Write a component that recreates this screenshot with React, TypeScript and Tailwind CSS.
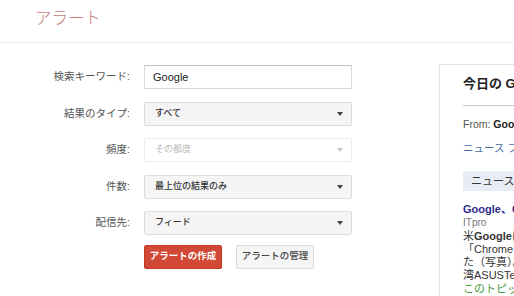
import React from 'react';

const jp = "font-['Liberation_Sans','Noto_Sans_CJK_JP',sans-serif]";

const Caret: React.FC<{ light?: boolean }> = ({ light }) => (
  <span
    className={`w-0 h-0 border-l-[3.5px] border-r-[3.5px] border-t-[4px] border-l-transparent border-r-transparent ${
      light ? 'border-t-[#c8c8c8]' : 'border-t-[#444]'
    }`}
  />
);

const Row: React.FC<{ label: string; children: React.ReactNode }> = ({ label, children }) => (
  <div className="flex items-center h-[24px]">
    <label className="w-[131px] pr-[1px] text-right text-[10.5px] text-[#555] shrink-0">{label}</label>
    <div className="ml-[13px] w-[208px]">{children}</div>
  </div>
);

const Select: React.FC<{ value: string; disabled?: boolean }> = ({ value, disabled }) => (
  <div
    className={`h-[24px] flex items-center justify-between pl-[10px] pr-[8px] rounded-[2px] border ${
      disabled
        ? 'bg-white border-[#ececec] text-[#b9b9b9]'
        : 'bg-[#f5f5f5] border-[#dcdcdc] text-[#333] font-medium'
    } text-[9px]`}
  >
    <span>{value}</span>
    <Caret light={disabled} />
  </div>
);

export default function App() {
  return (
    <div className={`w-[514px] h-[296px] overflow-hidden bg-white ${jp}`}>
      {/* header */}
      <header className="h-[43px] border-b border-[#ebebeb] pl-[35px] flex items-center">
        <h1 className="text-[16.5px] font-light text-[#c47d76] -mt-[6px]">アラート</h1>
      </header>

      <div className="flex pt-[21px]">
        {/* form */}
        <div className="w-[439px] shrink-0 flex flex-col gap-[12.5px] pt-[1px]">
          <Row label="検索キーワード:">
            <div className="h-[24px] flex items-center pl-[8px] border border-[#d9d9d9] border-t-[#c4c4c4] bg-white text-[11px] text-[#222]">
              Google
            </div>
          </Row>
          <Row label="結果のタイプ:">
            <Select value="すべて" />
          </Row>
          <Row label="頻度:">
            <Select value="その都度" disabled />
          </Row>
          <Row label="件数:">
            <Select value="最上位の結果のみ" />
          </Row>
          <Row label="配信先:">
            <Select value="フィード" />
          </Row>
          <div className="flex gap-[14px] pl-[144px] -mt-[3px]">
            <button className="h-[24px] w-[78px] rounded-[2px] bg-[#d14836] border border-[#c53727] text-white text-[9.5px] font-bold">
              アラートの作成
            </button>
            <button className="h-[24px] w-[78px] rounded-[2px] bg-[#f5f5f5] border border-[#dcdcdc] text-[#444] text-[9.5px] font-medium">
              アラートの管理
            </button>
          </div>
        </div>

        {/* preview */}
        <aside className="w-[320px] shrink-0 h-[260px] border-l border-t border-[#e3e3e3] pl-[23px] pt-[11px] whitespace-nowrap">
          <h2 className="text-[13px] leading-[16px] font-bold text-[#222]">今日の Google アラート</h2>
          <div className="mt-[13px] border-t border-[#c8c8c8]" />
          <p className="mt-[11px] text-[10.5px] leading-[14px] text-[#555]">
            From: <span className="font-bold text-[#222]">Google アラート</span>
          </p>
          <p className="mt-[10px] text-[10.5px] leading-[14px] text-[#4a6fa5]">ニュース フィード</p>
          <div className="mt-[16px] h-[20px] bg-[#e8ecf4] flex items-center pl-[8px] text-[11px] text-[#333]">
            ニュース
          </div>
          <div className="mt-[12px] text-[11px] leading-[13.3px] text-[#333]">
            <p className="font-bold text-[#2b2b8c]">Google、Chromebookを発表</p>
            <p className="text-[#777] text-[10px]">ITpro</p>
            <p>
              米<span className="font-bold">Google</span>は現地時間5月11日、同社のOS
            </p>
            <p>「Chrome OS」を搭載するノートパソコンを発表し</p>
            <p>た（写真）。韓国Samsung Electronicsと台</p>
            <p>湾ASUSTeK Computerが製造する。</p>
            <p className="text-[#4a9a3a]">このトピックに関する記事をすべて表示</p>
          </div>
        </aside>
      </div>
    </div>
  );
}
